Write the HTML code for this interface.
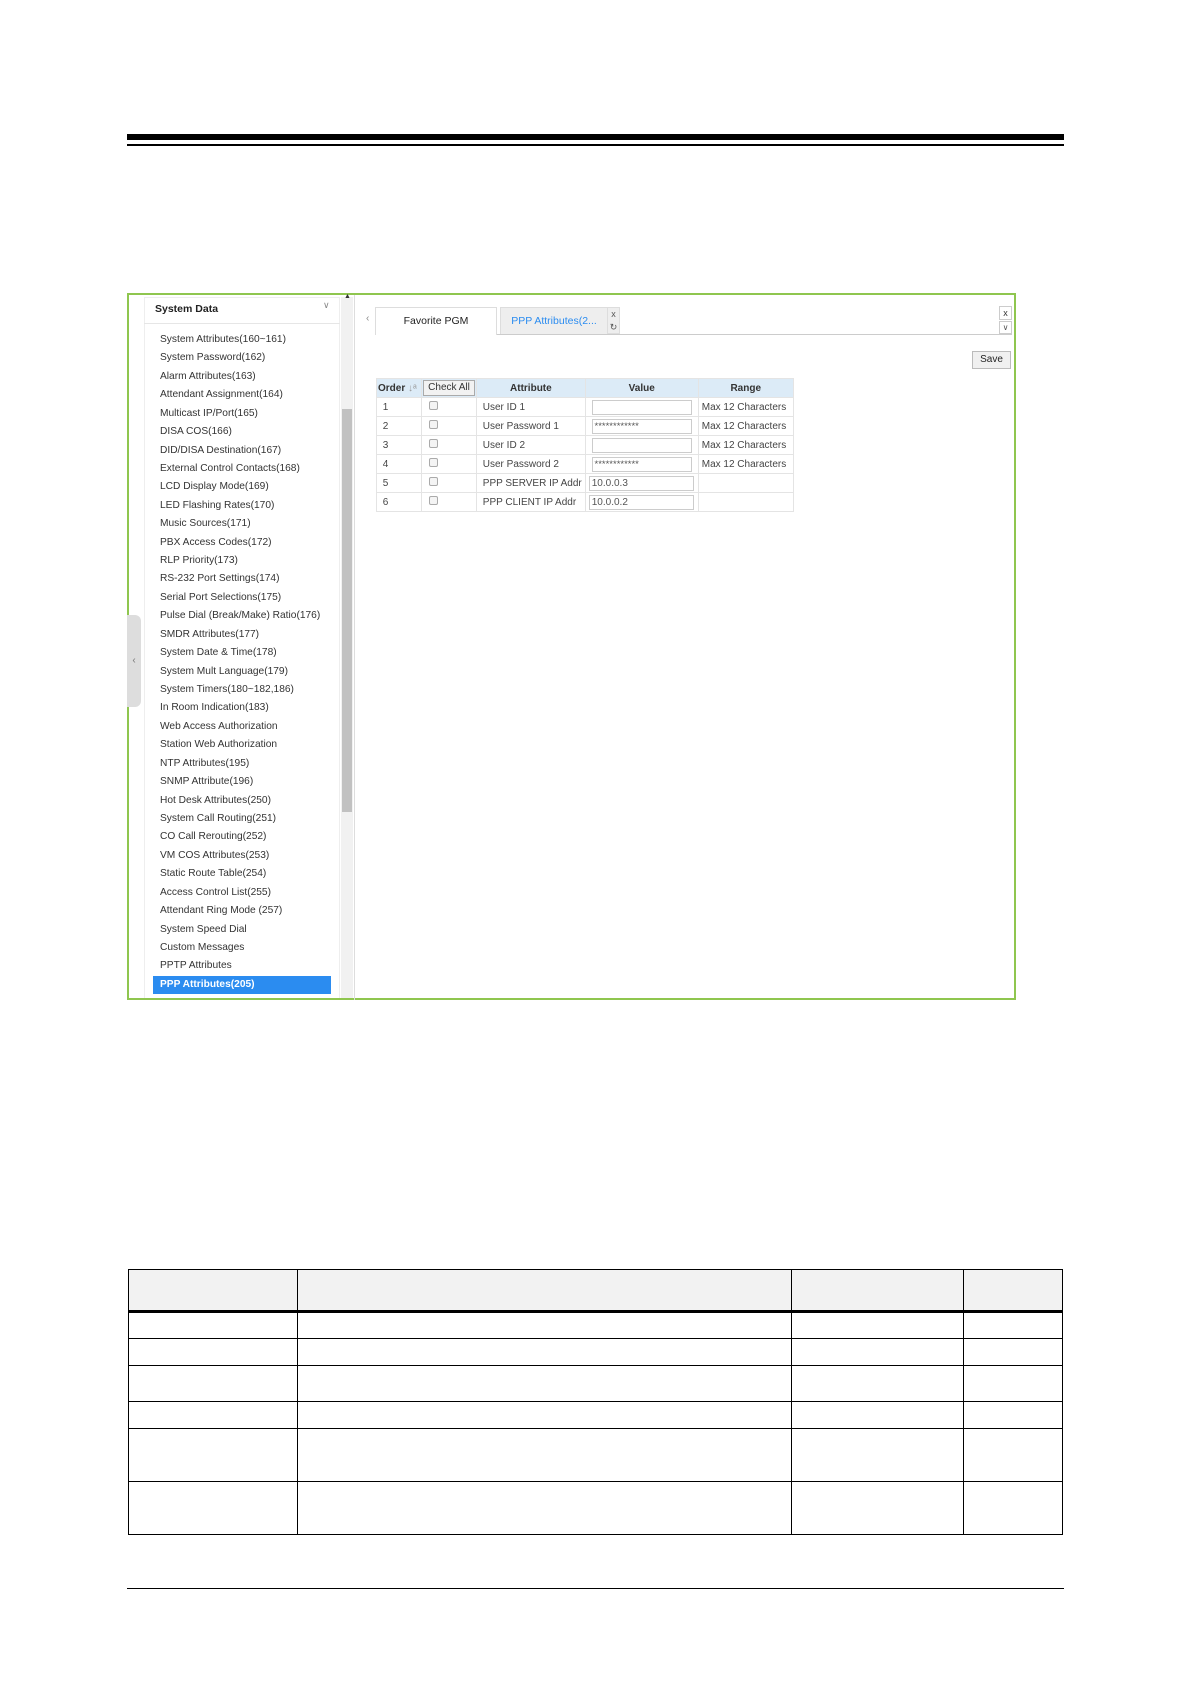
<!DOCTYPE html>
<html><head><meta charset="utf-8"><style>
*{margin:0;padding:0;box-sizing:border-box}
body{width:1191px;height:1684px;background:#fff;position:relative;font-family:"Liberation Sans",Arial,sans-serif;color:#333;overflow:hidden}
.a{position:absolute}
.side div{height:18.43px;line-height:18.43px;font-size:10.2px;padding-left:16px;color:#333;white-space:nowrap}
.side div.sel{background:#2b8cf0;color:#fff;font-weight:bold;margin-left:9px;padding-left:7px;width:178px}
table.t{border-collapse:collapse;font-size:10px;color:#444}
table.t td,table.t th{border:1px solid #e4e4e4;height:19px;padding:0 3px;white-space:nowrap}
table.t th{background:#dcebf7;font-weight:bold;color:#333}
.in{display:inline-block;border:1px solid #ccc;height:15px;width:100px;vertical-align:middle;font-size:9.5px;line-height:13px;padding-left:2px;color:#555}
.cb{display:inline-block;width:9px;height:9px;border:1px solid #aaa;border-radius:2px;background:#f4f4f4;margin-left:4px}
table.b{border-collapse:collapse;position:absolute;left:128px;top:1269px}
table.b td{border:1px solid #000;padding:0}
</style></head><body>
<div class="a" style="left:127px;top:134px;width:937px;height:6px;background:#000"></div>
<div class="a" style="left:127px;top:144px;width:937px;height:2px;background:#000"></div>

<div class="a" style="left:127px;top:293px;width:889px;height:707px;border:2px solid #8fc64f;background:#fff"></div>
<div class="a" style="left:127px;top:615px;width:14px;height:92px;background:#ddd;border-radius:0 6px 6px 0;font-size:10px;color:#777;line-height:92px;text-align:center">‹</div>
<div class="a" style="left:144px;top:297px;width:196px;height:701px;background:#fff;border:1px solid #eee;border-bottom:none"></div>
<div class="a" style="left:155px;top:301px;font-size:10.5px;font-weight:bold;color:#222;line-height:16px">System Data</div>
<div class="a" style="left:323px;top:300px;font-size:9px;color:#888">∨</div>
<div class="a" style="left:144px;top:323px;width:196px;height:1px;background:#e6e6e6"></div>
<div class="a side" style="left:144px;top:331px;width:196px">
<div>System Attributes(160~161)</div><div>System Password(162)</div><div>Alarm Attributes(163)</div><div>Attendant Assignment(164)</div><div>Multicast IP/Port(165)</div><div>DISA COS(166)</div><div>DID/DISA Destination(167)</div><div>External Control Contacts(168)</div><div>LCD Display Mode(169)</div><div>LED Flashing Rates(170)</div><div>Music Sources(171)</div><div>PBX Access Codes(172)</div><div>RLP Priority(173)</div><div>RS-232 Port Settings(174)</div><div>Serial Port Selections(175)</div><div>Pulse Dial (Break/Make) Ratio(176)</div><div>SMDR Attributes(177)</div><div>System Date &amp; Time(178)</div><div>System Mult Language(179)</div><div>System Timers(180~182,186)</div><div>In Room Indication(183)</div><div>Web Access Authorization</div><div>Station Web Authorization</div><div>NTP Attributes(195)</div><div>SNMP Attribute(196)</div><div>Hot Desk Attributes(250)</div><div>System Call Routing(251)</div><div>CO Call Rerouting(252)</div><div>VM COS Attributes(253)</div><div>Static Route Table(254)</div><div>Access Control List(255)</div><div>Attendant Ring Mode (257)</div><div>System Speed Dial</div><div>Custom Messages</div><div>PPTP Attributes</div><div class="sel">PPP Attributes(205)</div>
</div>
<div class="a" style="left:341px;top:297px;width:12px;height:701px;background:#f1f1f1"></div>
<div class="a" style="left:342px;top:409px;width:10px;height:403px;background:#c1c1c1"></div>
<div class="a" style="left:344px;top:293px;font-size:7px;color:#333">▲</div>
<div class="a" style="left:354px;top:295px;width:1px;height:705px;background:#ddd"></div>

<div class="a" style="left:366px;top:313px;font-size:10px;color:#888">‹</div>
<div class="a" style="left:375px;top:334px;width:637px;height:1px;background:#ccc"></div>
<div class="a" style="left:375px;top:307px;width:122px;height:28px;border:1px solid #ddd;border-bottom:none;background:#fff;font-size:10.5px;color:#222;text-align:center;line-height:26px">Favorite PGM</div>
<div class="a" style="left:500px;top:307px;width:108px;height:27px;border:1px solid #ddd;border-bottom:none;background:#eee;font-size:10.5px;color:#2b8cf0;text-align:center;line-height:26px">PPP Attributes(2...</div>
<div class="a" style="left:608px;top:307px;width:12px;height:27px;background:#eee;border:1px solid #ddd;border-left:none;font-size:9px;color:#555;text-align:center;line-height:13px">x<br>↻</div>
<div class="a" style="left:999px;top:306px;width:13px;height:14px;border:1px solid #ccc;font-size:9px;text-align:center;line-height:12px;color:#333">x</div>
<div class="a" style="left:999px;top:321px;width:13px;height:13px;border:1px solid #ccc;font-size:8px;text-align:center;line-height:12px;color:#555">∨</div>
<div class="a" style="left:972px;top:351px;width:39px;height:18px;border:1px solid #bbb;background:#f0f0f0;font-size:10px;text-align:center;line-height:16px;color:#222">Save</div>

<table class="t a" style="left:376px;top:378px">
<tr><th style="width:45px;text-align:left;padding-left:1px">Order <span style="color:#999;font-weight:normal">↓ᵃ</span></th><th style="width:55px;background:#dcebf7;padding:0 1px"><span style="display:inline-block;border:1px solid #aaa;background:#f2f2f2;font-weight:normal;width:52px;height:16px;line-height:14px;font-size:10px;text-align:center">Check All</span></th><th style="width:108px">Attribute</th><th style="width:113px">Value</th><th style="width:95px">Range</th></tr>
<tr><td>&nbsp;1</td><td><span class="cb"></span></td><td>&nbsp;User ID 1</td><td>&nbsp;<span class="in"></span></td><td>Max 12 Characters</td></tr>
<tr><td>&nbsp;2</td><td><span class="cb"></span></td><td>&nbsp;User Password 1</td><td>&nbsp;<span class="in">************</span></td><td>Max 12 Characters</td></tr>
<tr><td>&nbsp;3</td><td><span class="cb"></span></td><td>&nbsp;User ID 2</td><td>&nbsp;<span class="in"></span></td><td>Max 12 Characters</td></tr>
<tr><td>&nbsp;4</td><td><span class="cb"></span></td><td>&nbsp;User Password 2</td><td>&nbsp;<span class="in">************</span></td><td>Max 12 Characters</td></tr>
<tr><td>&nbsp;5</td><td><span class="cb"></span></td><td>&nbsp;PPP SERVER IP Addr</td><td><span class="in" style="width:105px;font-size:10px">10.0.0.3</span></td><td></td></tr>
<tr><td>&nbsp;6</td><td><span class="cb"></span></td><td>&nbsp;PPP CLIENT IP Addr</td><td><span class="in" style="width:105px;font-size:10px">10.0.0.2</span></td><td></td></tr>
</table>

<table class="b">
<tr style="height:42px;background:#f2f2f2"><td style="width:169px"></td><td style="width:494px"></td><td style="width:172px"></td><td style="width:99px"></td></tr>
<tr style="height:27px"><td style="border-top:3px solid #000"></td><td style="border-top:3px solid #000"></td><td style="border-top:3px solid #000"></td><td style="border-top:3px solid #000"></td></tr>
<tr style="height:27px"><td></td><td></td><td></td><td></td></tr>
<tr style="height:36px"><td></td><td></td><td></td><td></td></tr>
<tr style="height:27px"><td></td><td></td><td></td><td></td></tr>
<tr style="height:53px"><td></td><td></td><td></td><td></td></tr>
<tr style="height:53px"><td></td><td></td><td></td><td></td></tr>
</table>
<div class="a" style="left:127px;top:1588px;width:937px;height:1px;background:#000"></div>
</body></html>
